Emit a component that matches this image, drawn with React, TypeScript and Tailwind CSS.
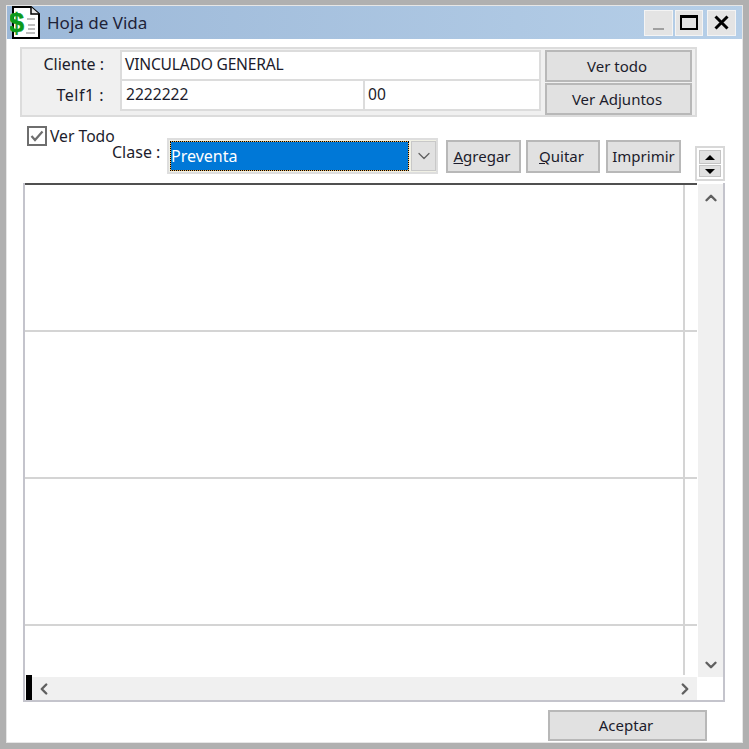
import { ChevronDown, ChevronLeft, ChevronRight, ChevronUp } from 'lucide-react'

const font = { fontFamily: '"Noto Sans", "Liberation Sans", sans-serif' }

function WinButton({ label, className }: { label: React.ReactNode; className: string }) {
    return (
        <button className={`flex items-center justify-center bg-[#e1e1e1] border-2 border-[#b8b8b8] pr-[3px] text-[15px] text-[#1c1c2c] ${className}`}>
            {label}
        </button>
    )
}

function FileIcon() {
    return (
        <svg width="30" height="33" viewBox="0 0 30 33">
            <path d="M3 1 H21 L29 8 V32 H3 Z" fill="#fff" stroke="#000" strokeWidth="2" />
            <path d="M21 1 V8 H29" fill="#e8e8e8" stroke="#000" strokeWidth="1.5" />
            <path d="M17 13 H25 M18 19 H25 M18 23 H25 M16 27 H25" stroke="#a8a8a8" strokeWidth="1.5" />
            <text x="-1" y="26" fontSize="27" fontWeight="700" fill="#0c9a1c" stroke="#0c9a1c" strokeWidth="0.6" fontFamily="Liberation Sans, sans-serif">$</text>
        </svg>
    )
}

function GridRow({ last }: { last?: boolean }) {
    return (
        <div className={`flex ${last ? 'h-[49px]' : 'h-[147px] border-b-2 border-[#d4d4d4]'}`}>
            <div className="flex-1" />
            <div className="w-[14px] border-l-2 border-[#d4d4d4]" />
        </div>
    )
}

export default function App() {
    return (
        <div style={font} className="w-[749px] h-[749px] bg-[#b0b0b0] pt-[5px] pl-[6px] overflow-hidden">
            <div className="w-[737px] h-[738px] bg-white border border-[#e6e6e6]">
                {/* Title bar */}
                <div className="h-[33px] flex items-center bg-gradient-to-r from-[#9cb8d8] to-[#b6cfe8]">
                    <div className="ml-[3px] w-[30px] h-[33px]"><FileIcon /></div>
                    <span className="ml-[7px] text-[17px] text-[#1e2338]">Hoja de Vida</span>
                    <div className="ml-auto mr-[6px] flex">
                        <div className="w-[29px] h-[26px] bg-[#e4e4e4] border border-[#f4f4f4] flex items-end justify-center pb-[5px]">
                            <div className="w-[11px] h-[2px] bg-[#a0a0a0]" />
                        </div>
                        <div className="ml-[2px] w-[28px] h-[26px] bg-[#e4e4e4] border border-[#f4f4f4] flex items-center justify-center">
                            <div className="w-[18px] h-[15px] border-2 border-t-[3px] border-black" />
                        </div>
                        <div className="ml-[4px] w-[29px] h-[26px] bg-[#e4e4e4] border border-[#f4f4f4] flex items-center justify-center">
                            <svg width="15" height="15" viewBox="0 0 15 15">
                                <path d="M1.5 1.5 L13.5 13.5 M13.5 1.5 L1.5 13.5" stroke="#000" strokeWidth="3" />
                            </svg>
                        </div>
                    </div>
                </div>

                {/* Client panel */}
                <div className="mt-[8px] ml-[13px] w-[677px] h-[70px] flex bg-[#f0f0f0] border-2 border-[#dcdcdc] pt-[1px] text-[15.6px] text-[#1c1c2c]">
                    <div className="w-[98px] flex flex-col text-right whitespace-nowrap text-[16px]">
                        <div className="h-[30px] pr-[16px] leading-[28px]">Cliente :</div>
                        <div className="h-[30px] pr-[16px] leading-[30px] tracking-[0.5px]">Telf1 :</div>
                    </div>
                    <div className="w-[421px] h-[61px] flex flex-col">
                        <div className="h-[31px] bg-white border-2 border-[#dcdcdc] pl-[3px] leading-[25px] tracking-[-0.2px]">VINCULADO GENERAL</div>
                        <div className="h-[30px] flex">
                            <div className="w-[245px] bg-white border-2 border-t-0 border-[#dcdcdc] pl-[4px] leading-[26px]">2222222</div>
                            <div className="flex-1 bg-white border-2 border-t-0 border-l-0 border-[#dcdcdc] pl-[3px] leading-[26px]">00</div>
                        </div>
                    </div>
                    <div className="ml-[4px] w-[147px] flex flex-col gap-[1px]">
                        <WinButton label="Ver todo" className="h-[32px] text-[15.6px]" />
                        <WinButton label="Ver Adjuntos" className="h-[32px] text-[15.6px]" />
                    </div>
                </div>

                {/* Filter row */}
                <div className="h-[66px] flex items-start pl-[20px] text-[15.7px] text-[#1c1c2c]">
                    <div className="mt-[9px] w-[85px] flex items-start whitespace-nowrap">
                        <div className="w-[20px] h-[20px] shrink-0 bg-white border-2 border-[#6e6e6e] flex items-center justify-center">
                            <svg width="14" height="12" viewBox="0 0 14 12">
                                <path d="M1.5 6 L5 10 L12.5 1.5" fill="none" stroke="#6e6e6e" strokeWidth="2.2" />
                            </svg>
                        </div>
                        <span className="ml-[3px] leading-[20px]">Ver Todo</span>
                    </div>
                    <div className="mt-[25px] w-[55px] leading-[20px] whitespace-nowrap text-[16px]">Clase :</div>
                    <div className="mt-[21px] w-[271px] h-[36px] flex items-center bg-[#f1f1e6] border-2 border-[#dedede] pl-[1px]">
                        <div className="w-[239px] h-[30px] bg-[#f2b45c] border border-dotted border-black">
                            <div className="h-full bg-[#0078d7] text-white text-[16px] leading-[28px]">Preventa</div>
                        </div>
                        <div className="ml-[2px] w-[25px] h-[30px] bg-[#e1e1e1] border border-[#c8c8c8] flex items-center justify-center">
                            <ChevronDown size={20} strokeWidth={1.5} className="text-[#606060]" />
                        </div>
                    </div>
                    <WinButton className="mt-[23px] ml-[8px] w-[75px] h-[33px]" label={<span><u>A</u>gregar</span>} />
                    <WinButton className="mt-[23px] ml-[5px] w-[74px] h-[33px]" label={<span><u>Q</u>uitar</span>} />
                    <WinButton className="mt-[23px] ml-[6px] w-[75px] h-[33px] !pr-0 text-[14.2px]" label="Imprimir" />
                    <div className="mt-[29px] ml-[14px] w-[30px] h-[35px] bg-white border-2 border-[#d8d8d8] flex flex-col items-center justify-center gap-[1px]">
                        <div className="w-[22px] h-[14px] bg-[#e1e1e1] border border-[#c4c4c4] flex items-center justify-center">
                            <div className="w-0 h-0 border-x-[5px] border-x-transparent border-b-[5px] border-b-black" />
                        </div>
                        <div className="w-[22px] h-[12px] bg-[#e1e1e1] border border-[#c4c4c4] flex items-center justify-center">
                            <div className="w-0 h-0 border-x-[5px] border-x-transparent border-t-[5px] border-t-black" />
                        </div>
                    </div>
                </div>

                {/* Data grid */}
                <div className="ml-[16px] w-[702px] h-[519px] flex border-2 border-t-0 border-[#c4c4cc]">
                    <div className="w-[672px] flex flex-col">
                        <div className="h-[2px] bg-[#505050]" />
                        <GridRow />
                        <GridRow />
                        <GridRow />
                        <GridRow last />
                        <div className="h-[25px] flex items-end">
                            <div className="ml-[1px] w-[6px] h-full bg-black" />
                            <div className="flex-1 h-[23px] bg-[#f0f0f0] flex items-center justify-between pl-[3px] pr-[3px]">
                                <ChevronLeft size={18} strokeWidth={3.2} className="text-[#606060]" />
                                <ChevronRight size={18} strokeWidth={3.2} className="text-[#606060]" />
                            </div>
                        </div>
                    </div>
                    <div className="ml-[1px] flex-1 flex flex-col">
                        <div className="mt-[1px] h-[493px] bg-[#f0f0f0] flex flex-col items-center justify-between pt-[5px] pb-[3px]">
                            <ChevronUp size={18} strokeWidth={3.2} className="text-[#606060]" />
                            <ChevronDown size={18} strokeWidth={3.2} className="text-[#606060]" />
                        </div>
                    </div>
                </div>

                {/* Footer */}
                <WinButton label="Aceptar" className="mt-[8px] ml-[541px] w-[159px] h-[31px] text-[15.4px]" />
            </div>
        </div>
    )
}
